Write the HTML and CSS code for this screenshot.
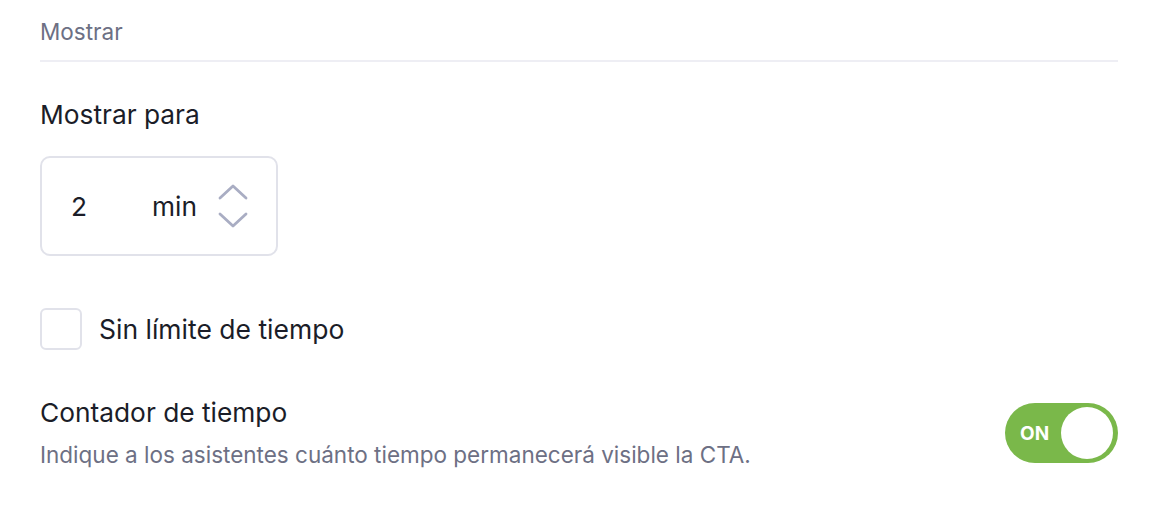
FILE: index.html
```html
<!DOCTYPE html>
<html lang="es">
<head>
<meta charset="utf-8">
<link rel="stylesheet" href="styles.css">
</head>
<body>
<div class="panel">
  <div class="section-head">Mostrar</div>
  <div class="field-label">Mostrar para</div>
  <div class="duration">
    <span class="num">2</span>
    <span class="unit">min</span>
    <span class="spin">
      <svg width="30" height="46" viewBox="0 0 30 46" fill="none" stroke="#a9adc3" stroke-width="2.8" stroke-linecap="round" stroke-linejoin="round">
        <path d="M2 14 L15 2 L28 14"/>
        <path d="M2 30 L15 42 L28 30"/>
      </svg>
    </span>
  </div>
  <label class="check-row">
    <span class="box"></span>
    <span class="check-text">Sin límite de tiempo</span>
  </label>
  <div class="counter-row">
    <div class="counter-text">
      <div class="counter-title">Contador de tiempo</div>
      <div class="counter-desc">Indique a los asistentes cuánto tiempo permanecerá visible la CTA.</div>
    </div>
    <div class="toggle">
      <span class="toggle-label">ON</span>
      <span class="knob"></span>
    </div>
  </div>
</div>
</body>
</html>
```
FILE: styles.css
```css
html, body {
  margin: 0;
  padding: 0;
  background: #ffffff;
}
body {
  font-family: Inter, "Noto Sans", sans-serif;
  color: #1b1d28;
}
.panel {
  padding: 0 40px;
}
.section-head {
  font-size: 22.5px;
  line-height: 24px;
  color: #6d7084;
  padding: 20px 0 16px;
  border-bottom: 2px solid #eeeef4;
}
.field-label {
  margin-top: 38px;
  font-size: 26.3px;
  line-height: 30px;
}
.duration {
  margin-top: 26px;
  box-sizing: border-box;
  width: 238px;
  height: 100px;
  border: 2px solid #e1e2ea;
  border-radius: 10px;
  display: flex;
  align-items: center;
  font-size: 26.3px;
}
.num {
  margin-left: 29px;
  width: 81px;
}
.unit {
  width: 66px;
}
.spin {
  display: flex;
  margin-top: 2px;
}
.spin svg {
  display: block;
}
.check-row {
  margin-top: 52px;
  display: flex;
  align-items: center;
  gap: 17px;
}
.box {
  box-sizing: border-box;
  width: 42px;
  height: 42px;
  border: 2px solid #e1e2ea;
  border-radius: 6px;
}
.check-text {
  font-size: 26.5px;
  line-height: 30px;
}
.counter-row {
  margin-top: 48px;
  display: flex;
  align-items: center;
  justify-content: space-between;
}
.counter-title {
  font-size: 26.3px;
  line-height: 30px;
}
.counter-desc {
  margin-top: 14px;
  font-size: 22.5px;
  line-height: 26px;
  color: #6d7084;
}
.toggle {
  box-sizing: border-box;
  width: 113px;
  height: 60px;
  border-radius: 30px;
  background: #7ab84a;
  display: flex;
  align-items: center;
  justify-content: space-between;
  padding: 0 5px 0 15px;
}
.toggle-label {
  color: #ffffff;
  font-weight: 700;
  font-size: 19px;
}
.knob {
  width: 52px;
  height: 52px;
  border-radius: 50%;
  background: #ffffff;
}
```
